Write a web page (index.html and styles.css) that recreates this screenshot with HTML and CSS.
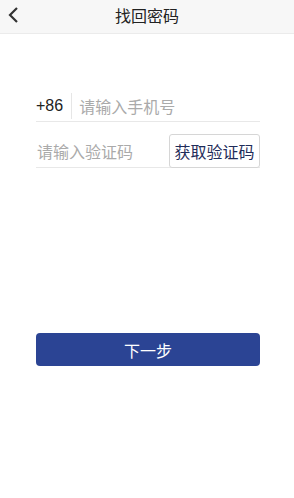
FILE: index.html
```html
<!DOCTYPE html>
<html lang="zh-CN">

<head>
    <meta charset="UTF-8">
    <meta name="viewport" content="width=device-width, initial-scale=1.0">
    <title>找回密码</title>
    <link rel="stylesheet" href="styles.css">
</head>

<body>
    <div class="header">
        <a href="#" class="back">
            <svg width="12" height="16" viewBox="0 0 12 16">
                <path d="M10 1 L3 8 L10 15" fill="none" stroke="#333" stroke-width="2.2"/>
            </svg>
        </a>
        <h1>找回密码</h1>
    </div>

    <form class="form">
        <div class="form-row">
            <span class="prefix">+86</span>
            <input type="tel" placeholder="请输入手机号">
        </div>

        <div class="form-row code-row">
            <input type="text" placeholder="请输入验证码">
            <button type="button" class="code-btn">获取验证码</button>
        </div>

        <button type="submit" class="next-btn">下一步</button>
    </form>
</body>

</html>
```

FILE: styles.css
```css
* {
    margin: 0;
    padding: 0;
    box-sizing: border-box;
    font-family: 'Noto Sans CJK SC', 'Noto Sans', sans-serif;
}

body {
    background-color: #fff;
    color: #333;
}

.header {
    height: 34px;
    background-color: #f7f7f7;
    border-bottom: 1px solid #ebebeb;
    display: flex;
    align-items: center;
    justify-content: center;
    position: relative;
}

.header h1 {
    font-size: 16px;
    font-weight: 400;
    color: #222;
    line-height: 1;
    margin-top: -4px;
}

.back {
    position: absolute;
    left: 7px;
    top: 7px;
    display: flex;
}

.form {
    padding: 0 34px 0 36px;
    margin-top: 56px;
}

.form-row {
    display: flex;
    align-items: center;
    height: 32px;
    border-bottom: 1px solid #e8e8e8;
}

.prefix {
    font-size: 16px;
    color: #222;
    padding-right: 8px;
    border-right: 1px solid #e6e6e6;
    line-height: 26px;
    font-family: 'Liberation Sans', 'Noto Sans CJK SC', sans-serif;
}

.form-row input {
    flex: 1;
    min-width: 0;
    border: none;
    outline: none;
    font-size: 16px;
    padding-left: 7px;
    color: #333;
    background: transparent;
}

.form-row input::placeholder {
    color: #aaa;
}

.code-row {
    height: 46px;
    padding-top: 12px;
    align-items: flex-start;
}

.code-row input {
    padding-left: 1px;
    height: 34px;
}

.code-btn {
    width: 91px;
    height: 34px;
    border: 1px solid #d6d6d6;
    border-radius: 3px;
    background: #fff;
    color: #1f2d5a;
    font-size: 16px;
    cursor: pointer;
}

.next-btn {
    display: block;
    width: 100%;
    height: 33px;
    margin-top: 165px;
    background-color: #2b4494;
    color: #fff;
    border: none;
    border-radius: 4px;
    font-size: 16px;
    cursor: pointer;
}
```
